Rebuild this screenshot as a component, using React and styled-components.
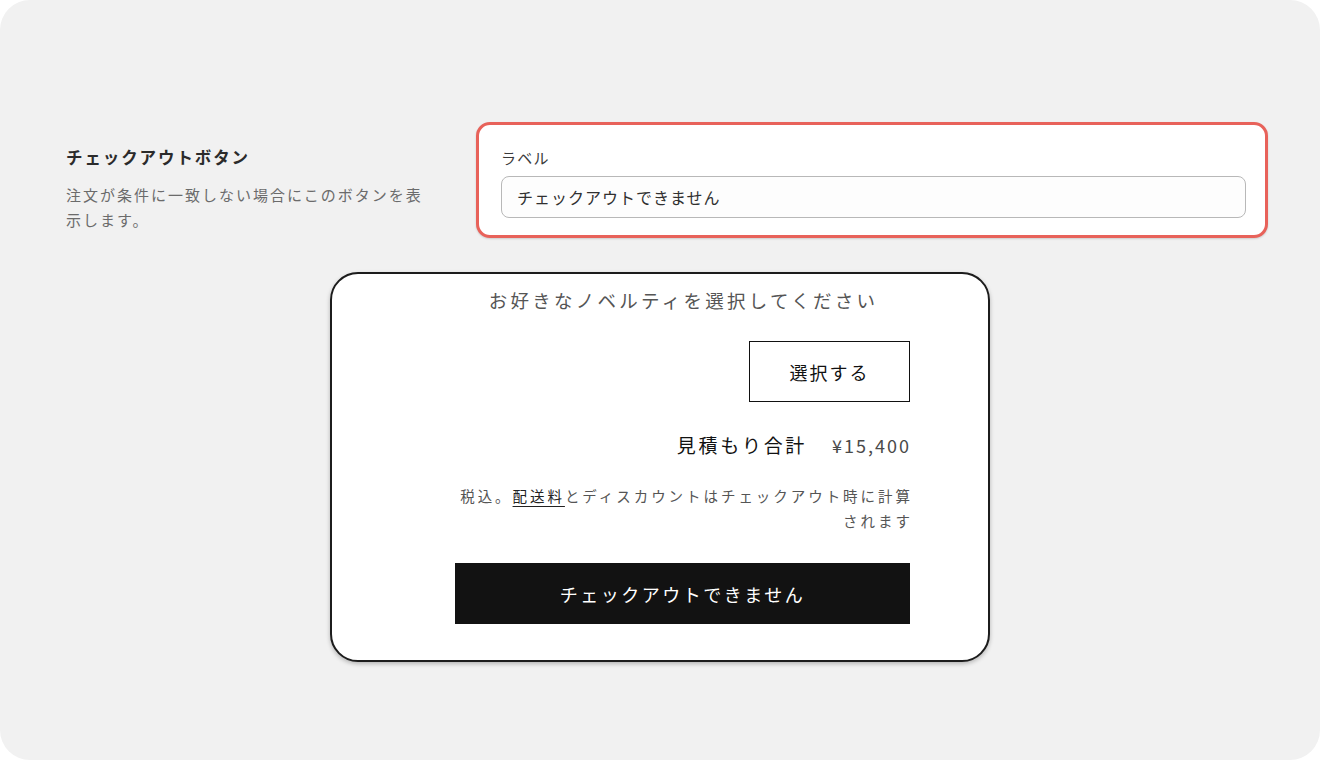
import styled, { createGlobalStyle } from "styled-components";

const GlobalStyle = createGlobalStyle`
  html, body {
    margin: 0;
    padding: 0;
    background: #ffffff;
  }
  body {
    font-family: "Noto Sans CJK JP", "Noto Sans", sans-serif;
  }
`;

const Page = styled.div`
  width: 1320px;
  height: 760px;
  box-sizing: border-box;
  background: #f1f1f1;
  border-radius: 30px;
  padding-top: 122px;
  display: flex;
  flex-direction: column;
  align-items: center;
`;

const SettingRow = styled.div`
  width: 100%;
  box-sizing: border-box;
  padding: 0 52px 0 66px;
  display: flex;
  align-items: flex-start;
`;

const Info = styled.div`
  width: 410px;
  flex-shrink: 0;
  padding-top: 23px;
`;

const Heading = styled.h2`
  margin: 0;
  font-size: 16.5px;
  font-weight: 700;
  letter-spacing: 1.9px;
  line-height: 24px;
  color: #2b2b2b;
`;

const Description = styled.p`
  margin: 13px 0 0;
  width: 370px;
  font-size: 15px;
  letter-spacing: 2px;
  line-height: 25px;
  color: #6b6b6b;
`;

const SettingCard = styled.div`
  flex: 1;
  background: #ffffff;
  border: 3px solid #e8625a;
  border-radius: 14px;
  padding: 23px 19px 17px 22px;
  box-shadow: 0 1px 2px rgba(0, 0, 0, 0.15);
`;

const Label = styled.div`
  font-size: 15px;
  letter-spacing: 1.3px;
  line-height: 20px;
  color: #3a3a3a;
  margin-bottom: 8px;
`;

const TextInput = styled.input`
  display: block;
  width: 100%;
  box-sizing: border-box;
  height: 42px;
  padding: 0 15px;
  border: 1px solid #b8b8b8;
  border-radius: 8px;
  background: #fdfdfd;
  font-family: inherit;
  font-size: 16px;
  letter-spacing: 1px;
  color: #303030;
  outline: none;
`;

const Preview = styled.div`
  margin-top: 34px;
  width: 660px;
  height: 390px;
  box-sizing: border-box;
  background: #ffffff;
  border: 2px solid #1c1c1c;
  border-radius: 28px;
  box-shadow: 0 2px 4px rgba(0, 0, 0, 0.25);
  padding: 11px 78px 0 123px;
  display: flex;
  flex-direction: column;
  align-items: flex-end;
`;

const Title = styled.div`
  align-self: stretch;
  text-align: center;
  font-size: 18.5px;
  letter-spacing: 3.25px;
  line-height: 30px;
  color: #555555;
  margin-right: -2px;
`;

const SelectButton = styled.button`
  margin-top: 26px;
  width: 161px;
  height: 61px;
  background: #ffffff;
  border: 1px solid #111111;
  font-family: inherit;
  font-size: 18px;
  letter-spacing: 2px;
  color: #111111;
  cursor: pointer;
`;

const TotalRow = styled.div`
  margin-top: 28px;
  display: flex;
  align-items: center;
  gap: 25px;
  line-height: 30px;
`;

const TotalLabel = styled.span`
  font-size: 19px;
  letter-spacing: 2.7px;
  color: #121212;
`;

const Price = styled.span`
  font-size: 18px;
  letter-spacing: 2px;
  color: #4a4a4a;
  margin-right: -1px;
`;

const TaxNote = styled.p`
  margin: 23px -2.9px 0 0;
  text-align: right;
  font-size: 14.5px;
  letter-spacing: 2.95px;
  line-height: 25px;
  color: #555555;
`;

const NoteLink = styled.a`
  color: #222222;
  text-decoration: underline;
  text-underline-offset: 4px;
  text-decoration-thickness: 1px;
`;

const CheckoutButton = styled.button`
  margin-top: 30px;
  width: 455px;
  height: 61px;
  background: #121212;
  border: none;
  font-family: inherit;
  font-size: 18px;
  letter-spacing: 2.5px;
  color: #ffffff;
  cursor: not-allowed;
`;

const App = () => {
  return (
    <>
      <GlobalStyle />
      <Page>
        <SettingRow>
          <Info>
            <Heading>チェックアウトボタン</Heading>
            <Description>
              注文が条件に一致しない場合にこのボタンを表示します。
            </Description>
          </Info>
          <SettingCard>
            <Label>ラベル</Label>
            <TextInput defaultValue="チェックアウトできません" />
          </SettingCard>
        </SettingRow>

        <Preview>
          <Title>お好きなノベルティを選択してください</Title>
          <SelectButton>選択する</SelectButton>
          <TotalRow>
            <TotalLabel>見積もり合計</TotalLabel>
            <Price>¥15,400</Price>
          </TotalRow>
          <TaxNote>
            税込。<NoteLink href="#">配送料</NoteLink>
            とディスカウントはチェックアウト時に計算
            <br />
            されます
          </TaxNote>
          <CheckoutButton>チェックアウトできません</CheckoutButton>
        </Preview>
      </Page>
    </>
  );
};

export default App;
